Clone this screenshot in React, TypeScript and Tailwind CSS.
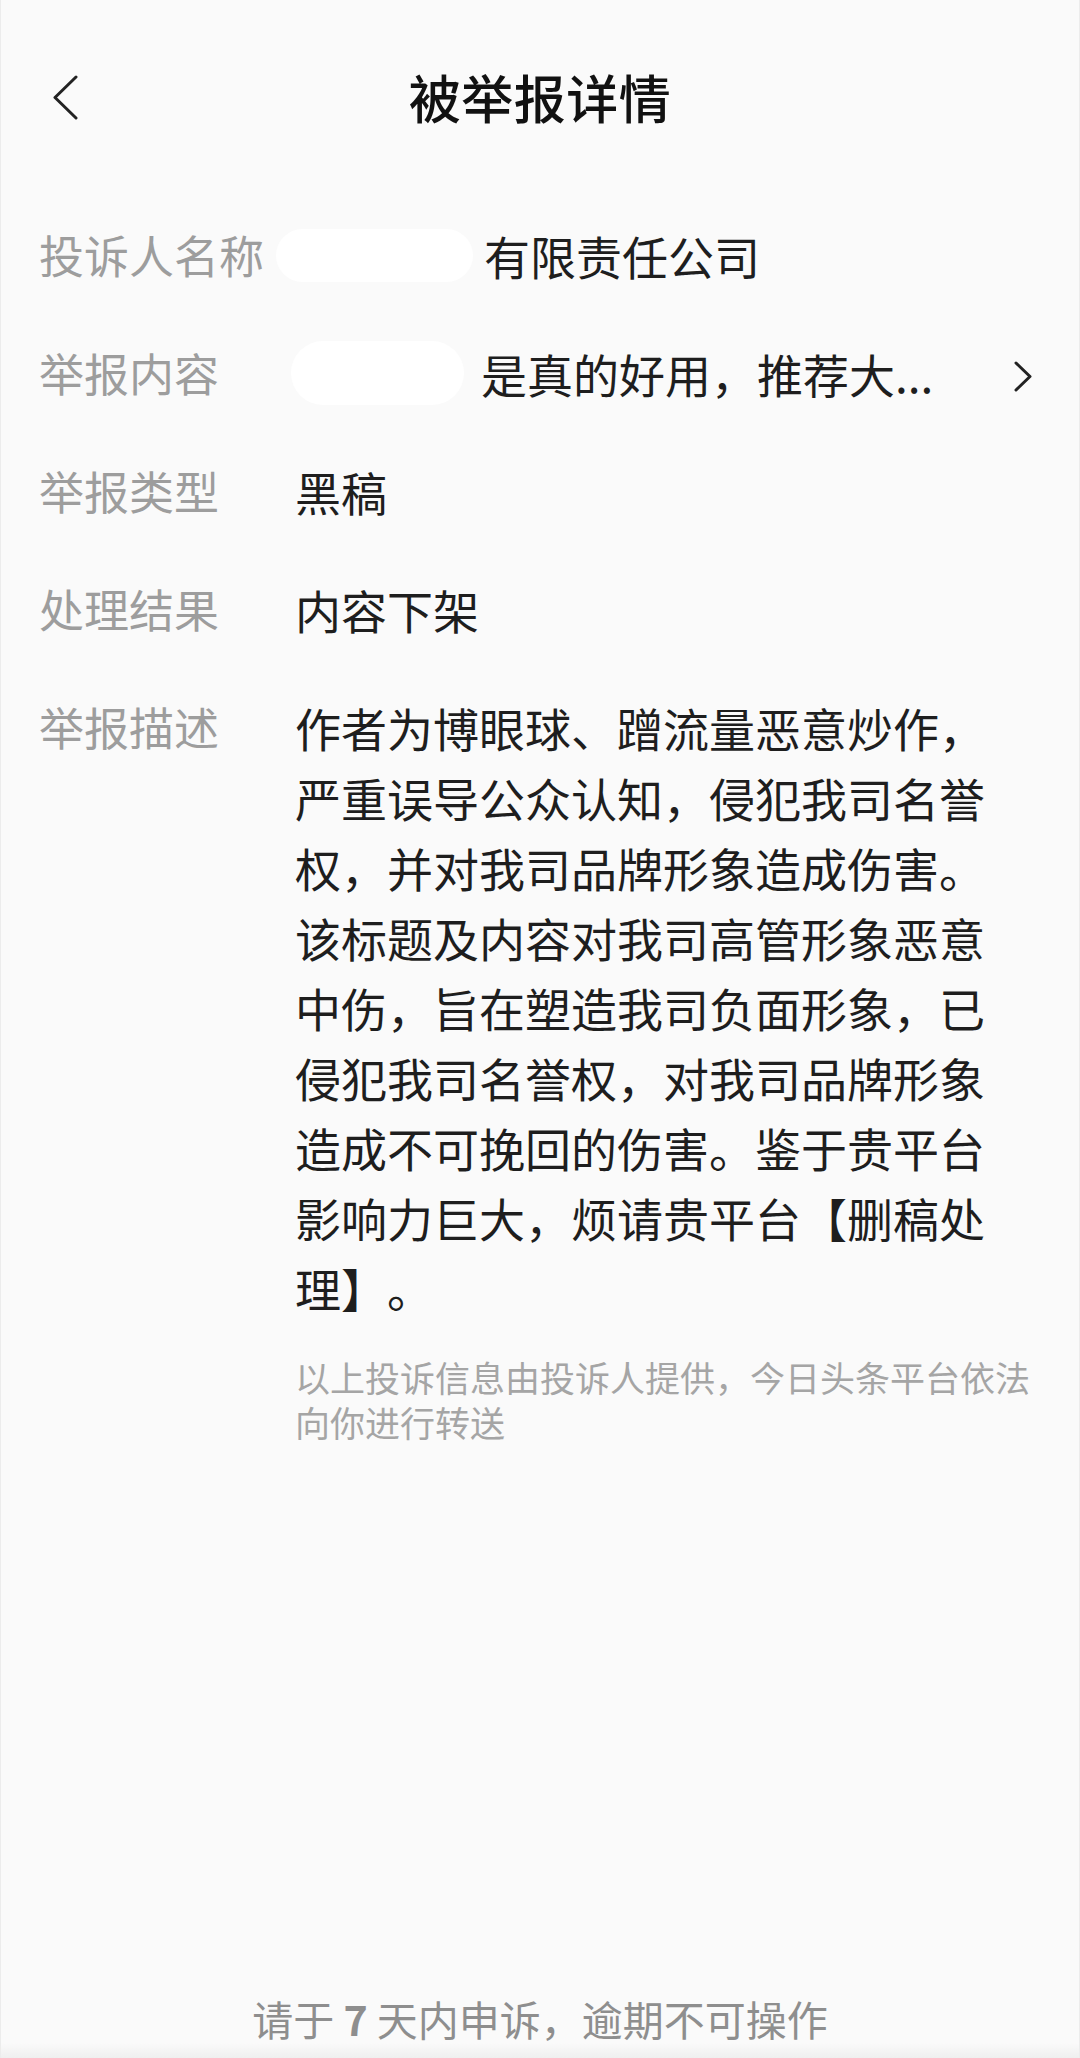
import React from "react";

const descLines = [
  "作者为博眼球、蹭流量恶意炒作，",
  "严重误导公众认知，侵犯我司名誉",
  "权，并对我司品牌形象造成伤害。",
  "该标题及内容对我司高管形象恶意",
  "中伤，旨在塑造我司负面形象，已",
  "侵犯我司名誉权，对我司品牌形象",
  "造成不可挽回的伤害。鉴于贵平台",
  "影响力巨大，烦请贵平台【删稿处",
  "理】。",
];

function Row({ label, children }: { label: string; children: React.ReactNode }) {
  return (
    <div className="flex items-start">
      <div className="w-[256px] shrink-0 text-[45px] leading-[70px] text-[#9d9d9d] whitespace-nowrap">{label}</div>
      <div className="flex-1 min-w-0 text-[46px] leading-[70px] text-[#1e1e1e]">{children}</div>
    </div>
  );
}

export default function App() {
  return (
    <div
      className="w-[1080px] h-[2058px] bg-[#fafafa] flex flex-col border-x border-[#ececec] [text-spacing-trim:space-all]"
      style={{ fontFamily: '"Noto Sans CJK SC", "Noto Sans", sans-serif' }}
    >
      {/* header */}
      <div className="grid grid-cols-[1fr_auto_1fr] items-center h-[70px] mt-[62px]">
        <div className="pl-[51px] flex items-center">
          <svg width="26" height="45" viewBox="0 0 26 45" fill="none">
            <path d="M24 2 L3 22.5 L24 43" stroke="#222" strokeWidth="3" strokeLinecap="round" strokeLinejoin="round" />
          </svg>
        </div>
        <h1 className="text-[52px] leading-[70px] text-[#111] font-medium tracking-[0.5px]">被举报详情</h1>
        <div />
      </div>

      {/* rows */}
      <div className="flex flex-col gap-[48px] pl-[38px] mt-[88px]">
        <Row label="投诉人名称">
          <div className="flex items-center">
            <span className="inline-block w-[197px] h-[53px] -ml-[19px] rounded-full bg-white" />
            <span className="ml-[11px]">有限责任公司</span>
          </div>
        </Row>
        <Row label="举报内容">
          <div className="flex items-center justify-between pr-[47px]">
            <div className="flex items-center">
              <span className="inline-block w-[173px] h-[64px] -ml-[4px] rounded-[32px] bg-white" />
              <span className="ml-[17px] whitespace-nowrap">是真的好用，推荐大...</span>
            </div>
            <svg width="18" height="31" viewBox="0 0 18 31" fill="none" className="mt-[6px]">
              <path d="M2 2 L16 15.5 L2 29" stroke="#222" strokeWidth="3" strokeLinecap="round" strokeLinejoin="round" />
            </svg>
          </div>
        </Row>
        <Row label="举报类型">黑稿</Row>
        <Row label="处理结果">内容下架</Row>
        <Row label="举报描述">
          <div className="flex flex-col">
            {descLines.map((l) => (
              <span key={l} className="block whitespace-nowrap">
                {l}
              </span>
            ))}
          </div>
        </Row>
      </div>

      {/* note */}
      <div className="pl-[294px] mt-[32px] text-[35px] leading-[45px] text-[#a5a5a5]">
        <span className="block whitespace-nowrap">以上投诉信息由投诉人提供，今日头条平台依法</span>
        <span className="block whitespace-nowrap">向你进行转送</span>
      </div>

      {/* bottom */}
      <div className="mt-auto flex flex-col items-center">
        <p className="text-[41px] leading-[50px] text-[#8e8e8e] whitespace-nowrap">
          请于 <span className="font-bold">7</span> 天内申诉，逾期不可操作
        </p>
        <div className="h-[15px] w-full bg-gradient-to-b from-[#fafafa] to-[#efefef]" />
      </div>
    </div>
  );
}
